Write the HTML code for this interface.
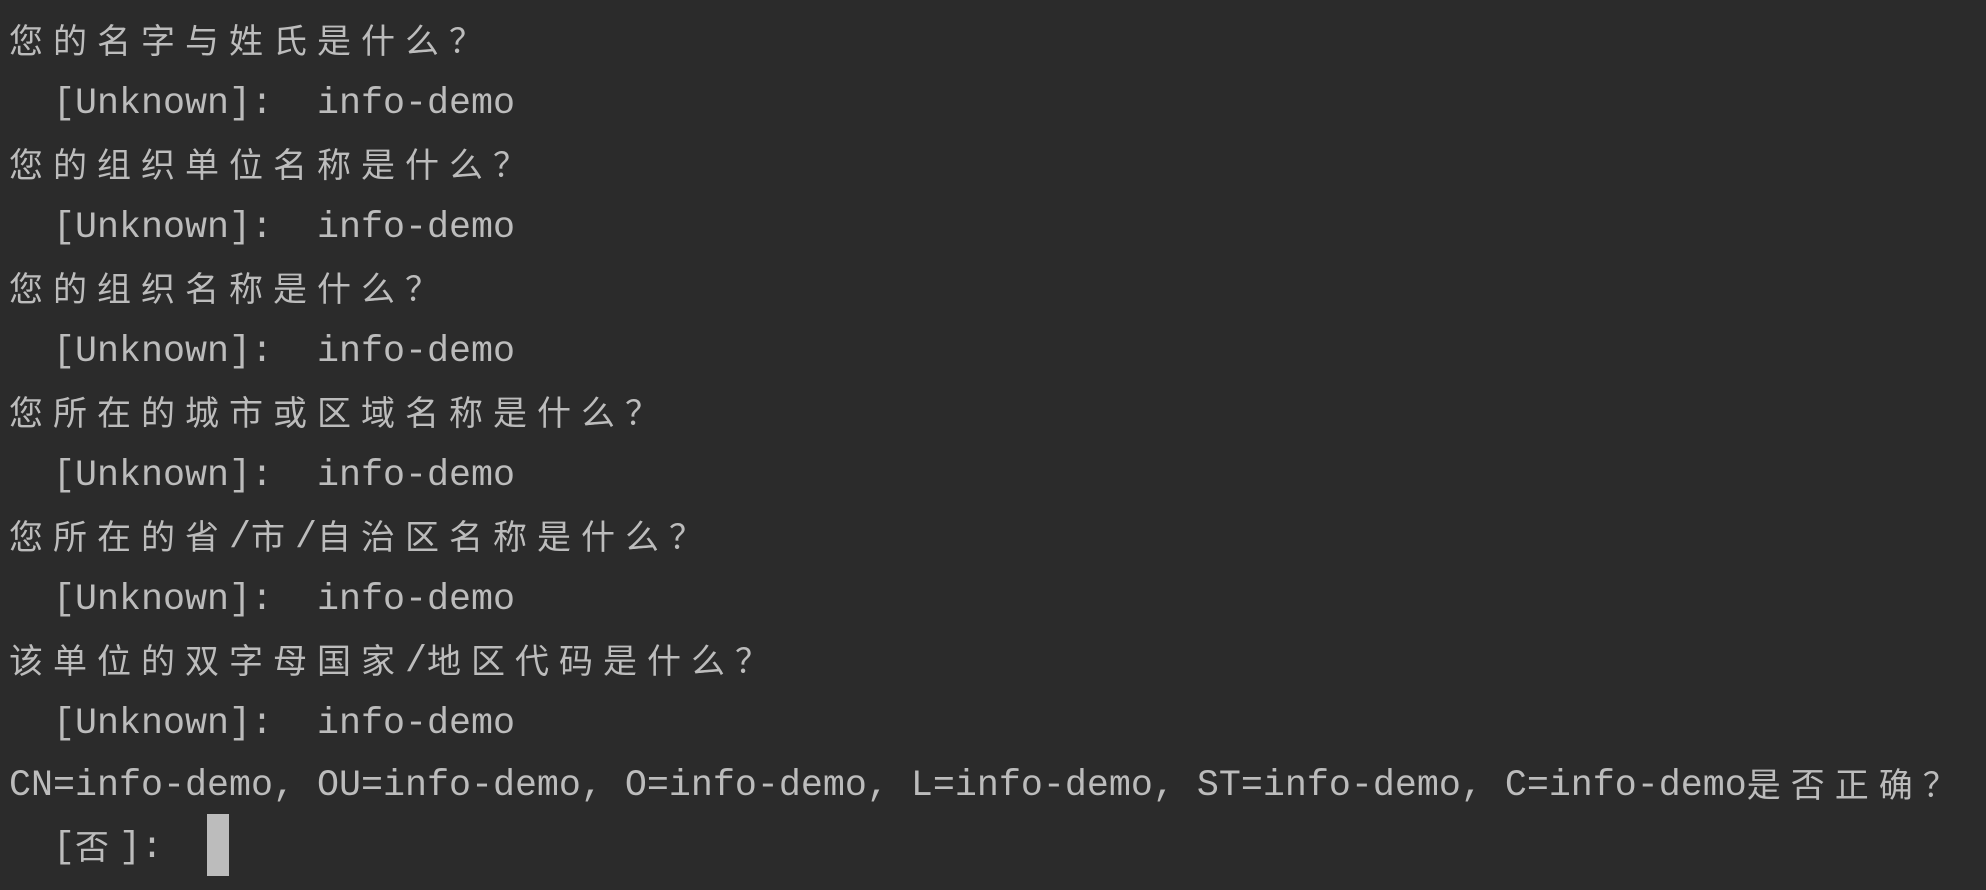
<!DOCTYPE html>
<html><head><meta charset="utf-8"><style>
html,body{margin:0;padding:0;background:#2b2b2b;width:1986px;height:890px;overflow:hidden}
.t{position:absolute;left:9px;top:8px;font-family:"Liberation Mono","Noto Sans CJK SC",monospace;font-size:36.67px;color:#bcbcbc}
.t div{height:59px;padding-top:3px;line-height:62px;white-space:pre}
.c{font-family:"Noto Sans CJK SC",sans-serif;font-size:34px;letter-spacing:10px;line-height:62px;display:inline-block;vertical-align:top;height:62px;position:relative;top:-3px}
.cur{display:inline-block;width:22px;height:62px;background:#bcbcbc;vertical-align:top;position:relative;top:-3px}
</style></head><body><div class="t">
<div><span class="c">您的名字与姓氏是什么？</span></div>
<div>  [Unknown]:  info-demo</div>
<div><span class="c">您的组织单位名称是什么？</span></div>
<div>  [Unknown]:  info-demo</div>
<div><span class="c">您的组织名称是什么？</span></div>
<div>  [Unknown]:  info-demo</div>
<div><span class="c">您所在的城市或区域名称是什么？</span></div>
<div>  [Unknown]:  info-demo</div>
<div><span class="c">您所在的省</span>/<span class="c">市</span>/<span class="c">自治区名称是什么？</span></div>
<div>  [Unknown]:  info-demo</div>
<div><span class="c">该单位的双字母国家</span>/<span class="c">地区代码是什么？</span></div>
<div>  [Unknown]:  info-demo</div>
<div>CN=info-demo, OU=info-demo, O=info-demo, L=info-demo, ST=info-demo, C=info-demo<span class="c">是否正确？</span></div>
<div>  [<span class="c">否</span>]:  <span class="cur"></span></div>
</div></body></html>
